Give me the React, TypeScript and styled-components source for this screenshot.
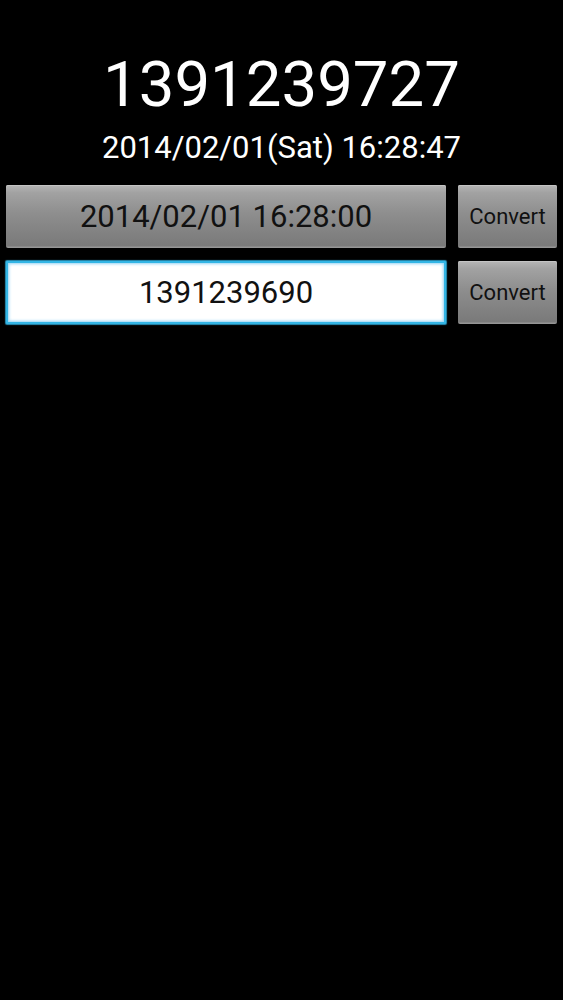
import React, { useState } from 'react';
import styled, { createGlobalStyle } from 'styled-components';

const GlobalStyle = createGlobalStyle`
  html, body {
    margin: 0;
    padding: 0;
    background: #000;
  }
  body {
    font-family: Roboto, "Liberation Sans", sans-serif;
    min-height: 1000px;
  }
`;

const Screen = styled.div`
  display: flex;
  flex-direction: column;
  min-height: 1000px;
  background: #000;
  color: #fff;
`;

const Header = styled.header`
  display: flex;
  flex-direction: column;
  align-items: center;
  padding-top: 53px;
`;

const Epoch = styled.div`
  font-size: 63.5px;
  line-height: 63px;
  color: #fff;
`;

const DateLine = styled.div`
  margin-top: 16px;
  font-size: 31px;
  line-height: 31px;
  color: #fff;
`;

const Rows = styled.div`
  display: flex;
  flex-direction: column;
  gap: 13px;
  padding: 22px 6px 0;
`;

const Row = styled.div`
  display: grid;
  grid-template-columns: 1fr 99px;
  gap: 12px;
  height: 63px;
`;

const GreyButton = styled.button<{ $size: number }>`
  height: 63px;
  padding: 0;
  border: none;
  border-radius: 2px;
  font-family: Roboto, "Liberation Sans", sans-serif;
  font-size: ${(p) => p.$size}px;
  color: #111;
  background: linear-gradient(
    to bottom,
    #b6b6b6 0%,
    #a2a2a2 12%,
    #8e8e8e 45%,
    #808080 80%,
    #7a7a7a 96%,
    #9c9c9c 100%
  );
  box-shadow: inset 0 1px 0 #c4c4c4;
  cursor: pointer;
`;

const EpochInput = styled.input`
  box-sizing: border-box;
  width: 100%;
  height: 63px;
  margin: 0;
  padding: 0;
  border: 2px solid #33b5e5;
  border-radius: 1px;
  background: #fff;
  box-shadow: 0 0 1px 1px rgba(51, 181, 229, 0.8), inset 0 0 3px 1px rgba(120, 200, 240, 0.8);
  font-family: Roboto, "Liberation Sans", sans-serif;
  font-size: 31px;
  color: #111;
  text-align: center;
  outline: none;
`;

export default function App() {
  const [epoch, setEpoch] = useState('1391239690');

  return (
    <Screen>
      <GlobalStyle />
      <Header>
        <Epoch>1391239727</Epoch>
        <DateLine>2014/02/01(Sat) 16:28:47</DateLine>
      </Header>
      <Rows>
        <Row>
          <GreyButton $size={31}>2014/02/01 16:28:00</GreyButton>
          <GreyButton $size={22}>Convert</GreyButton>
        </Row>
        <Row>
          <EpochInput value={epoch} onChange={(e) => setEpoch(e.target.value)} />
          <GreyButton $size={22}>Convert</GreyButton>
        </Row>
      </Rows>
    </Screen>
  );
}
